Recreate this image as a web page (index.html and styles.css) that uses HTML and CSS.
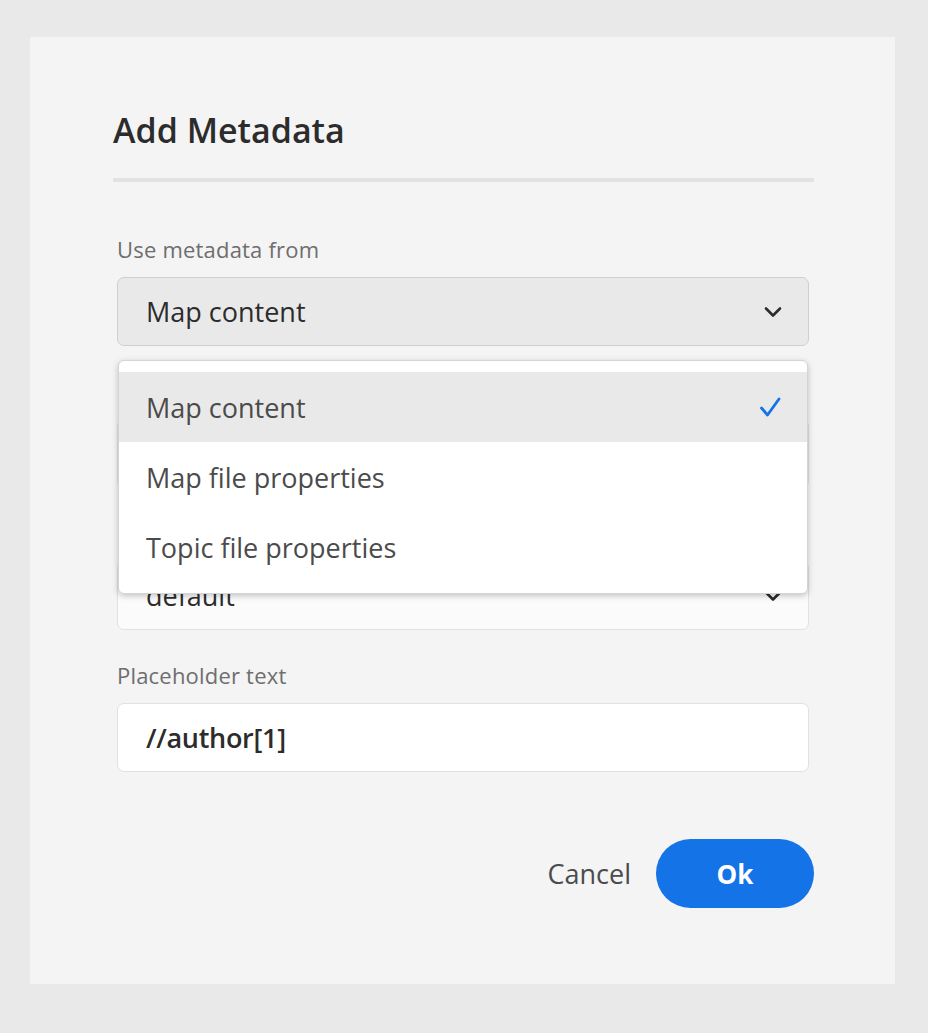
FILE: index.html
```html
<!DOCTYPE html>
<html lang="en">
<head>
<meta charset="utf-8">
<title>Add Metadata</title>
<link rel="stylesheet" href="styles.css">
</head>
<body>
<div class="dialog">
  <h1 class="title">Add Metadata</h1>
  <div class="divider"></div>
  <div class="form">
    <div class="field">
      <div class="label">Use metadata from</div>
      <div class="picker-wrap">
        <div class="picker open">
          <span class="picker-value">Map content</span>
          <svg class="chevron" width="18" height="12" viewBox="0 0 18 12"><path d="M2 2.5 L9 9.5 L16 2.5" fill="none" stroke="#2c2c2c" stroke-width="2.6" stroke-linecap="round" stroke-linejoin="round"/></svg>
        </div>
        <ul class="popover">
          <li class="item selected"><span>Map content</span>
            <svg class="check" width="24" height="24" viewBox="0 0 24 24"><path d="M3.5 13 L9.5 20 L21 4" fill="none" stroke="#1473e6" stroke-width="2.8" stroke-linecap="round" stroke-linejoin="round"/></svg>
          </li>
          <li class="item"><span>Map file properties</span></li>
          <li class="item"><span>Topic file properties</span></li>
        </ul>
      </div>
    </div>
    <div class="field">
      <div class="label"></div>
      <div class="textfield"></div>
    </div>
    <div class="field">
      <div class="label"></div>
      <div class="picker light">
        <span class="picker-value">default</span>
        <svg class="chevron" width="18" height="12" viewBox="0 0 18 12"><path d="M2 2.5 L9 9.5 L16 2.5" fill="none" stroke="#2c2c2c" stroke-width="2.6" stroke-linecap="round" stroke-linejoin="round"/></svg>
      </div>
    </div>
    <div class="field">
      <div class="label">Placeholder text</div>
      <div class="textfield"><span class="strong">//author[1]</span></div>
    </div>
  </div>
  <div class="actions">
    <button class="btn-cancel">Cancel</button>
    <button class="btn-ok">Ok</button>
  </div>
</div>
</body>
</html>
```
FILE: styles.css
```css
html, body {
  margin: 0;
  padding: 0;
}
body {
  background: #e9e9e9;
  font-family: "Open Sans", "Noto Sans", sans-serif;
  width: 928px;
  height: 1033px;
  overflow: hidden;
}
.dialog {
  box-sizing: border-box;
  margin: 37px 0 0 30px;
  width: 865px;
  height: 947px;
  background: #f4f4f4;
  padding: 0 81px 0 83px;
}
.title {
  margin: 0;
  padding-top: 70px;
  font-size: 34px;
  line-height: 46px;
  font-weight: 600;
  color: #2c2c2c;
  letter-spacing: 0;
}
.divider {
  margin-top: 25px;
  height: 4px;
  background: #e2e2e2;
}
.form {
  padding: 0 5px 0 4px;
  margin-top: 53px;
}
.field {
  display: flex;
  flex-direction: column;
}
.field + .field {
  margin-top: 31px;
}
.label {
  font-size: 22px;
  line-height: 28px;
  height: 28px;
  color: #6e6e6e;
  letter-spacing: 0.2px;
  margin-bottom: 14px;
}
.picker-wrap {
  position: relative;
}
.picker, .textfield {
  box-sizing: border-box;
  height: 69px;
  border-radius: 7px;
  display: flex;
  align-items: center;
  justify-content: space-between;
  padding: 0 26px 0 28px;
  font-size: 27px;
  color: #2c2c2c;
  letter-spacing: 0;
}
.picker {
  background: #e9e9e9;
  border: 1px solid #cfcfcf;
}
.picker.light {
  background: #fbfbfb;
  border: 1px solid #e1e1e1;
}
.textfield {
  background: #ffffff;
  border: 1px solid #e1e1e1;
}
.strong {
  font-weight: 600;
  letter-spacing: -0.3px;
}
.chevron {
  display: block;
}
.popover {
  position: absolute;
  top: 83px;
  left: 1px;
  right: 1px;
  margin: 0;
  padding: 11px 0;
  list-style: none;
  background: #ffffff;
  border: 1px solid #d4d4d4;
  border-radius: 6px;
  box-shadow: 0 2px 6px rgba(0, 0, 0, 0.22);
  z-index: 10;
}
.item {
  height: 70px;
  display: flex;
  align-items: center;
  justify-content: space-between;
  padding: 0 25px 0 27px;
  font-size: 27px;
  color: #4b4b4b;
  letter-spacing: 0;
}
.item.selected {
  background: #e9e9e9;
}
.check {
  display: block;
}
.actions {
  display: flex;
  justify-content: flex-end;
  align-items: center;
  margin-top: 67px;
  gap: 25px;
}
.btn-cancel {
  border: 0;
  background: transparent;
  font-family: inherit;
  font-size: 27px;
  color: #4b4b4b;
  letter-spacing: 0;
  padding: 0;
}
.btn-ok {
  border: 0;
  background: #1473e6;
  color: #ffffff;
  font-family: inherit;
  font-size: 26px;
  font-weight: 700;
  width: 158px;
  height: 69px;
  border-radius: 35px;
  padding: 0;
}
```
